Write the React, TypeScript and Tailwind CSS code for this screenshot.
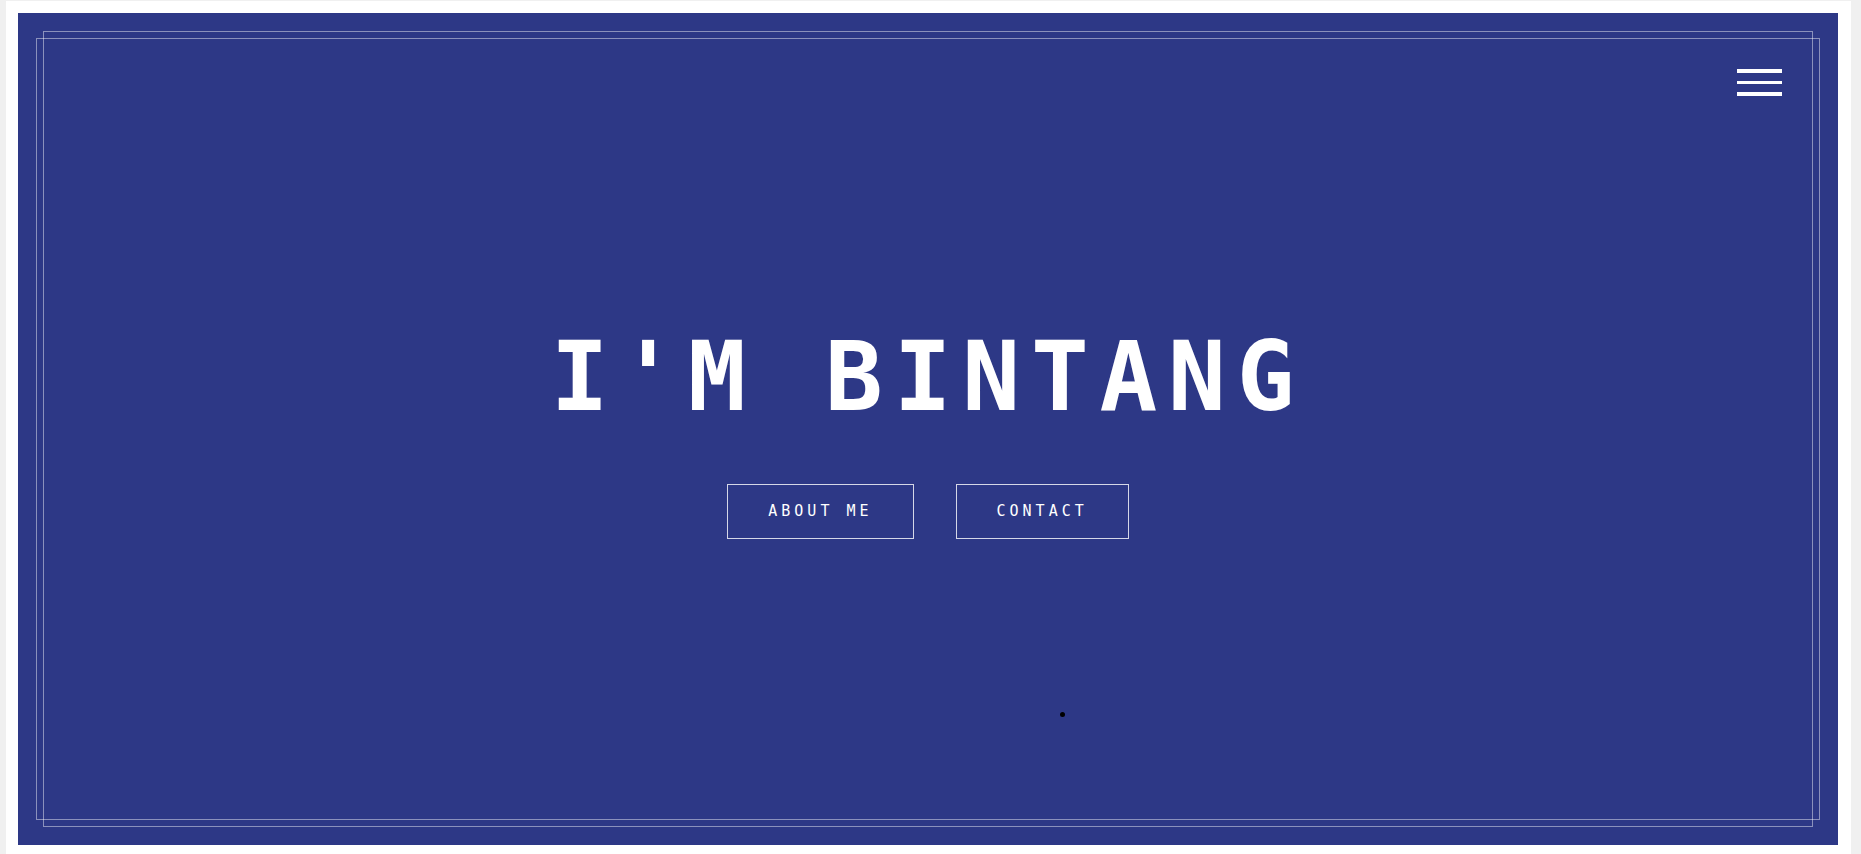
export default function App() {
  return (
    <div className="min-h-screen bg-[#f0f0f0] pl-[6px] pr-[10px] pt-px">
      <div className="bg-white pl-3 pr-[13px] pt-3 pb-3">
        <section className="relative flex h-[832px] flex-col items-center bg-[#2d3886] pt-[316px]">
          {/* double frame */}
          <div className="pointer-events-none absolute inset-x-[25px] inset-y-[18px] border border-white/45" />
          <div className="pointer-events-none absolute inset-x-[18px] inset-y-[25px] border border-white/45" />

          {/* menu */}
          <button className="absolute right-14 top-14 flex w-[45px] flex-col gap-[8px]">
            <span className="h-[3.5px] w-full bg-white" />
            <span className="h-[3.5px] w-full bg-white" />
            <span className="h-[3.5px] w-full bg-white" />
          </button>

          <h1 className="whitespace-pre text-[96px] font-bold leading-[96px] tracking-[10.8px] text-white [font-family:'DejaVu_Sans_Mono',monospace]">
            I'M BINTANG
          </h1>

          <div className="mt-[59px] flex gap-[42px] [font-family:'DejaVu_Sans_Mono',monospace]">
            <a className="flex h-[55px] items-center border border-white/80 px-10 text-[15px] tracking-[4px] text-white">
              ABOUT ME
            </a>
            <a className="flex h-[55px] items-center border border-white/80 px-10 text-[15px] tracking-[4px] text-white">
              CONTACT
            </a>
          </div>

          <span className="ml-[268px] mt-[173px] size-[5px] rounded-full bg-black" />
        </section>
      </div>
    </div>
  );
}
